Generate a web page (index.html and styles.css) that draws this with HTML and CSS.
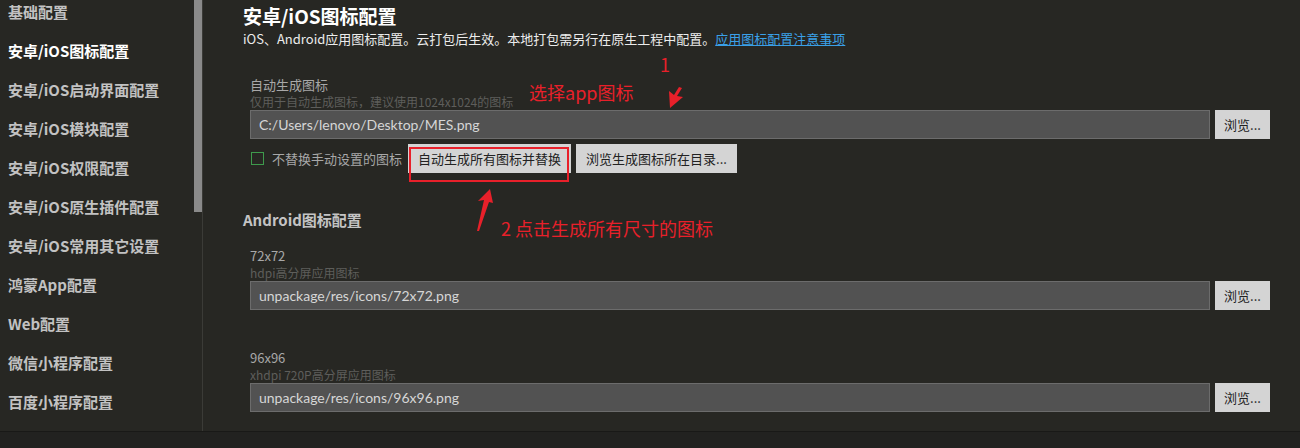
FILE: index.html
```html
<!DOCTYPE html>
<html lang="zh-CN">
<head>
  <meta charset="UTF-8">
  <title>安卓/iOS图标配置</title>
  <link rel="stylesheet" href="styles.css">
</head>
<body>
  <div class="app">
    <aside class="sidebar">
      <ul class="nav">
        <li>基础配置</li>
        <li class="active">安卓/iOS图标配置</li>
        <li>安卓/iOS启动界面配置</li>
        <li>安卓/iOS模块配置</li>
        <li>安卓/iOS权限配置</li>
        <li>安卓/iOS原生插件配置</li>
        <li>安卓/iOS常用其它设置</li>
        <li>鸿蒙App配置</li>
        <li>Web配置</li>
        <li>微信小程序配置</li>
        <li>百度小程序配置</li>
      </ul>
      <div class="scrollbar"><div class="thumb"></div></div>
    </aside>

    <main class="content">
      <h1 class="title">安卓/iOS图标配置</h1>
      <p class="desc">iOS、Android应用图标配置。云打包后生效。本地打包需另行在原生工程中配置。<a href="#">应用图标配置注意事项</a></p>

      <section class="group">
        <div class="label">自动生成图标</div>
        <div class="hint">仅用于自动生成图标，建议使用1024x1024的图标</div>
        <div class="field">
          <div class="input">C:/Users/lenovo/Desktop/MES.png</div>
          <button class="btn">浏览...</button>
        </div>
        <div class="actions">
          <label class="check"><span class="box"></span>不替换手动设置的图标</label>
          <button class="btn wide">自动生成所有图标并替换</button>
          <button class="btn wide">浏览生成图标所在目录...</button>
        </div>
      </section>

      <h2 class="subtitle">Android图标配置</h2>

      <section class="group icon-item">
        <div class="label">72x72</div>
        <div class="hint">hdpi高分屏应用图标</div>
        <div class="field">
          <div class="input">unpackage/res/icons/72x72.png</div>
          <button class="btn">浏览...</button>
        </div>
      </section>

      <section class="group icon-item next">
        <div class="label">96x96</div>
        <div class="hint">xhdpi 720P高分屏应用图标</div>
        <div class="field">
          <div class="input">unpackage/res/icons/96x96.png</div>
          <button class="btn">浏览...</button>
        </div>
      </section>
    </main>
  </div>
  <footer class="statusbar"></footer>

  <!-- 标注 -->
  <div class="note note-1">1</div>
  <div class="note note-pick">选择app图标</div>
  <div class="note note-2">2 点击生成所有尺寸的图标</div>
  <div class="mark-box"></div>
  <svg class="arrow arrow-1" width="20" height="26" viewBox="0 0 20 26">
    <polygon points="11,2 14,3 9,11 15,12 2,23 1,6 6,10" fill="#e8202a"/>
  </svg>
  <svg class="arrow arrow-2" width="20" height="44" viewBox="0 0 20 44">
    <polygon points="14,0 17,14 13,13 3,42 1,42 8,11 2,12" fill="#e8202a"/>
  </svg>
</body>
</html>
```

FILE: styles.css
```css
/* 基础 */
* {
  margin: 0;
  padding: 0;
  box-sizing: border-box;
}

body {
  font-family: "Noto Sans CJK SC", "Noto Sans", sans-serif;
  background-color: #272723;
  color: #c4c4c4;
  height: 448px;
  overflow: hidden;
  display: flex;
  flex-direction: column;
  position: relative;
}

.app {
  display: flex;
  height: 431px;
}

/* 左侧菜单 */
.sidebar {
  width: 203px;
  display: flex;
  border-right: 1px solid #3b3b37;
  overflow: hidden;
}

.nav {
  list-style: none;
  width: 194px;
  margin-top: -8px;
}

.nav li {
  height: 39px;
  line-height: 39px;
  padding-left: 8px;
  font-size: 15px;
  font-weight: bold;
  color: #c2c2c2;
  white-space: nowrap;
}

.nav li.active {
  color: #ffffff;
}

.scrollbar {
  width: 8px;
}

.scrollbar .thumb {
  height: 212px;
  background: #8a8a8a;
}

/* 右侧内容 */
.content {
  flex: 1;
  padding: 4px 30px 0 40px;
}

.title {
  font-size: 19px;
  line-height: 24px;
  font-weight: bold;
  color: #ffffff;
}

.desc {
  font-size: 13px;
  line-height: 18px;
  margin-top: 2px;
  color: #ececec;
}

.desc a {
  color: #3aa0e8;
}

.group {
  margin-top: 29px;
  padding-left: 7px;
}

.label {
  font-size: 13px;
  line-height: 16px;
  color: #a8a8a8;
}

.hint {
  font-size: 12px;
  line-height: 17px;
  color: #5e5e5b;
}

.field {
  display: flex;
  gap: 5px;
}

.input {
  flex: 1;
  height: 29px;
  line-height: 27px;
  padding-left: 8px;
  background: #525252;
  border: 1px solid #6c6c6c;
  font-family: Lato, "Noto Sans CJK SC", sans-serif;
  font-size: 14px;
  color: #d6d6d6;
}

.btn {
  width: 55px;
  height: 29px;
  border: none;
  background: #d4d4d4;
  color: #222;
  font-family: inherit;
  font-size: 13px;
}

.actions {
  display: flex;
  align-items: center;
  margin-top: 5px;
  height: 29px;
}

.check {
  display: flex;
  align-items: center;
  font-size: 13px;
  color: #a8a8a8;
  margin-right: 6px;
}

.check .box {
  width: 13px;
  height: 13px;
  border: 1px solid #3e9a4c;
  margin: 0 8px 0 1px;
}

.btn.wide {
  width: auto;
  padding: 0 10px;
  margin-right: 5px;
}

.subtitle {
  font-size: 15px;
  line-height: 20px;
  font-weight: bold;
  color: #c4c4c4;
  margin-top: 37px;
}

.icon-item {
  margin-top: 18px;
}

.icon-item.next {
  margin-top: 40px;
}

.statusbar {
  height: 17px;
  background: #222220;
  border-top: 1px solid #191917;
}

/* 标注 */
.note {
  position: absolute;
  color: #e8202a;
  font-size: 18px;
  line-height: 22px;
}

.note-1 {
  left: 660px;
  top: 53px;
}

.note-pick {
  left: 529px;
  top: 81px;
}

.note-2 {
  left: 501px;
  top: 217px;
}

.mark-box {
  position: absolute;
  left: 409px;
  top: 147px;
  width: 160px;
  height: 35px;
  border: 2px solid #e8202a;
}

.arrow {
  position: absolute;
}

.arrow-1 {
  left: 668px;
  top: 85px;
}

.arrow-2 {
  left: 476px;
  top: 189px;
}
```
